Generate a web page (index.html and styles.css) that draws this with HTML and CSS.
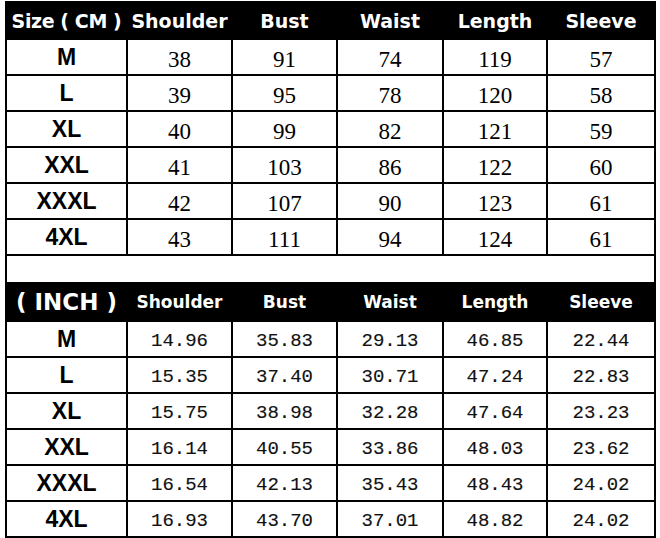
FILE: index.html
```html
<!DOCTYPE html>
<html>
<head>
<meta charset="utf-8">
<link rel="stylesheet" href="styles.css">
</head>
<body>
<table class="chart">
  <colgroup>
    <col class="c0"><col class="c1"><col class="c2"><col class="c3"><col class="c4"><col class="c5">
  </colgroup>
  <tbody class="cm">
    <tr class="head">
      <th>Size ( CM )</th><th>Shoulder</th><th>Bust</th><th>Waist</th><th>Length</th><th>Sleeve</th>
    </tr>
    <tr><td class="size">M</td><td>38</td><td>91</td><td>74</td><td>119</td><td>57</td></tr>
    <tr><td class="size">L</td><td>39</td><td>95</td><td>78</td><td>120</td><td>58</td></tr>
    <tr><td class="size">XL</td><td>40</td><td>99</td><td>82</td><td>121</td><td>59</td></tr>
    <tr><td class="size">XXL</td><td>41</td><td>103</td><td>86</td><td>122</td><td>60</td></tr>
    <tr><td class="size">XXXL</td><td>42</td><td>107</td><td>90</td><td>123</td><td>61</td></tr>
    <tr><td class="size">4XL</td><td>43</td><td>111</td><td>94</td><td>124</td><td>61</td></tr>
    <tr class="gap"><td colspan="6"></td></tr>
  </tbody>
  <tbody class="inch">
    <tr class="head">
      <th class="unit">( INCH )</th><th>Shoulder</th><th>Bust</th><th>Waist</th><th>Length</th><th>Sleeve</th>
    </tr>
    <tr><td class="size">M</td><td>14.96</td><td>35.83</td><td>29.13</td><td>46.85</td><td>22.44</td></tr>
    <tr><td class="size">L</td><td>15.35</td><td>37.40</td><td>30.71</td><td>47.24</td><td>22.83</td></tr>
    <tr><td class="size">XL</td><td>15.75</td><td>38.98</td><td>32.28</td><td>47.64</td><td>23.23</td></tr>
    <tr><td class="size">XXL</td><td>16.14</td><td>40.55</td><td>33.86</td><td>48.03</td><td>23.62</td></tr>
    <tr><td class="size">XXXL</td><td>16.54</td><td>42.13</td><td>35.43</td><td>48.43</td><td>24.02</td></tr>
    <tr><td class="size">4XL</td><td>16.93</td><td>43.70</td><td>37.01</td><td>48.82</td><td>24.02</td></tr>
  </tbody>
</table>
</body>
</html>
```

FILE: styles.css
```css
html, body {
  margin: 0;
  padding: 0;
  background: #fff;
}

body {
  padding: 1px 0 0 5px;
}

.chart {
  border-collapse: collapse;
  table-layout: fixed;
  width: 649px;
}

.c0 { width: 121px; }
.c1 { width: 105px; }
.c2 { width: 105px; }
.c3 { width: 106px; }
.c4 { width: 104px; }
.c5 { width: 108px; }

.chart th,
.chart td {
  border: 2px solid #000;
  padding: 0;
  text-align: center;
  vertical-align: middle;
  overflow: hidden;
  white-space: nowrap;
}

.head th {
  background: #000;
  color: #fff;
  font-family: "DejaVu Sans", sans-serif;
  font-weight: bold;
  height: 35px;
}

.cm .head th {
  font-size: 19px;
}

.cm .head th:first-child {
  letter-spacing: -0.4px;
}

.inch .head th {
  font-size: 17px;
  height: 36px;
}

.inch .head th.unit {
  font-size: 23px;
}

.chart td {
  height: 34px;
  color: #000;
}

.cm td {
  font-family: "Liberation Serif", serif;
  font-size: 23px;
  padding-top: 5px;
  height: 29px;
}

.inch td {
  font-family: "Liberation Mono", monospace;
  font-size: 19px;
  padding-top: 4px;
  height: 30px;
  color: #111;
  -webkit-text-stroke: 0.15px #111;
}

.chart td.size {
  font-family: "Liberation Sans", sans-serif;
  font-weight: bold;
  font-size: 23px;
  padding-top: 0;
  height: 34px;
  color: #000;
  -webkit-text-stroke: 0;
}

.chart .gap td {
  border-left: 2px solid #000;
  border-right: 2px solid #000;
  height: 26px;
  padding: 0;
}
```
